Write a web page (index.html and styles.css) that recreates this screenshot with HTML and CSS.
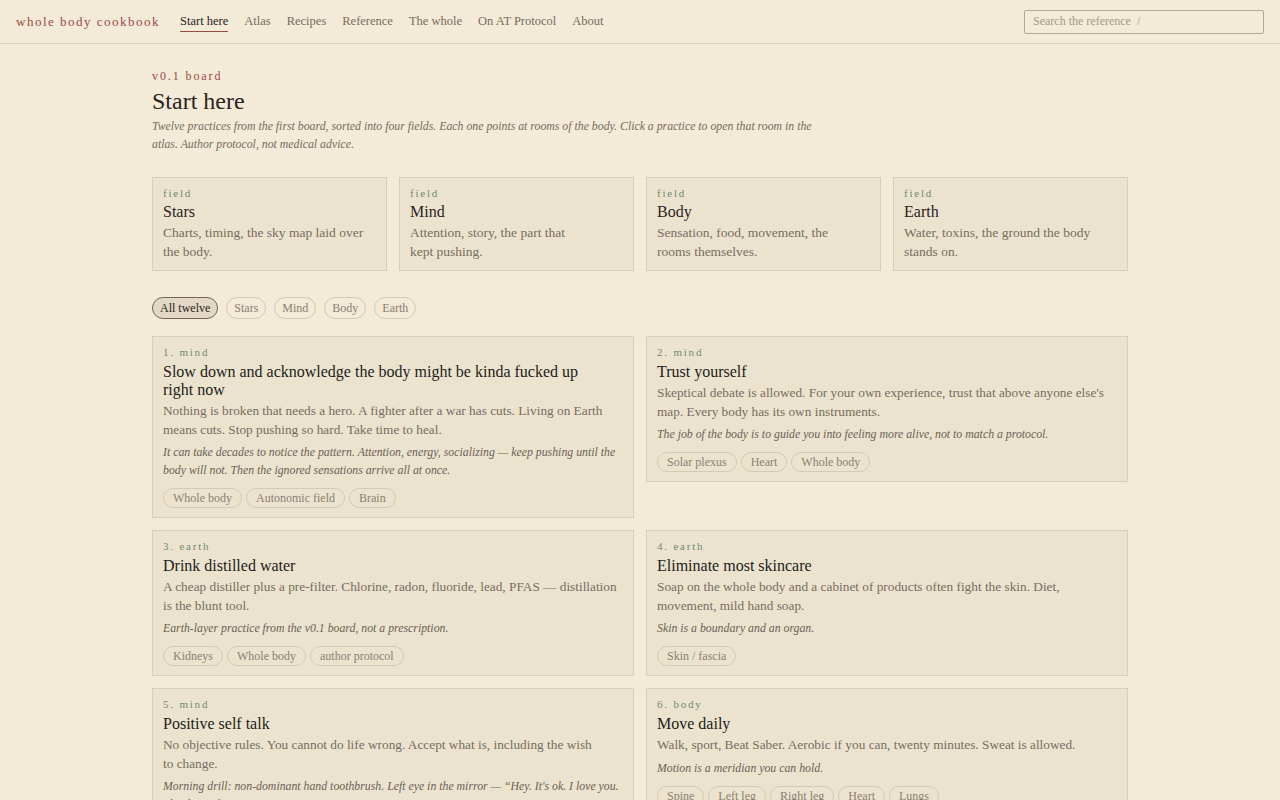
FILE: index.html
```html
<!DOCTYPE html>
<html lang="en">
  <head>
    <meta charset="utf-8" />
    <meta name="viewport" content="width=device-width, initial-scale=1" />
    <title>Start here · whole body cookbook</title>
    <link rel="stylesheet" href="styles.css">
  </head>
  <body>
    <header class="topbar">
      <a class="brand" href="#">whole body cookbook</a>
      <nav class="nav">
        <a class="nav-link active" href="#">Start here</a>
        <a class="nav-link" href="#">Atlas</a>
        <a class="nav-link" href="#">Recipes</a>
        <a class="nav-link" href="#">Reference</a>
        <a class="nav-link" href="#">The whole</a>
        <a class="nav-link" href="#">On AT Protocol</a>
        <a class="nav-link" href="#">About</a>
      </nav>
      <input class="search" type="text" placeholder="Search the reference  /">
    </header>

    <main class="page">
      <p class="eyebrow">v0.1 board</p>
      <h1 class="page-title">Start here</h1>
      <p class="intro">Twelve practices from the first board, sorted into four fields. Each one points at rooms of the body. Click a practice to open that room in the atlas. Author protocol, not medical advice.</p>

      <!-- the four fields -->
      <section class="fields">
        <div class="field">
          <span class="field-label">field</span>
          <h2 class="field-name">Stars</h2>
          <p class="field-desc">Charts, timing, the sky map laid over the body.</p>
        </div>
        <div class="field">
          <span class="field-label">field</span>
          <h2 class="field-name">Mind</h2>
          <p class="field-desc">Attention, story, the part that kept pushing.</p>
        </div>
        <div class="field">
          <span class="field-label">field</span>
          <h2 class="field-name">Body</h2>
          <p class="field-desc">Sensation, food, movement, the rooms themselves.</p>
        </div>
        <div class="field">
          <span class="field-label">field</span>
          <h2 class="field-name">Earth</h2>
          <p class="field-desc">Water, toxins, the ground the body stands on.</p>
        </div>
      </section>

      <div class="filters">
        <button class="pill active">All twelve</button>
        <button class="pill">Stars</button>
        <button class="pill">Mind</button>
        <button class="pill">Body</button>
        <button class="pill">Earth</button>
      </div>

      <!-- practices -->
      <section class="practices">
        <article class="practice">
          <span class="practice-num">1. mind</span>
          <h3 class="practice-title">Slow down and acknowledge the body might be kinda fucked up right&nbsp;now</h3>
          <p class="practice-body">Nothing is broken that needs a hero. A fighter after a war has cuts. Living on Earth means cuts. Stop pushing so hard. Take time to heal.</p>
          <p class="practice-note">It can take decades to notice the pattern. Attention, energy, socializing — keep pushing until the body will not. Then the ignored sensations arrive all at once.</p>
          <div class="tags">
            <span class="tag">Whole body</span>
            <span class="tag">Autonomic field</span>
            <span class="tag">Brain</span>
          </div>
        </article>

        <article class="practice">
          <span class="practice-num">2. mind</span>
          <h3 class="practice-title">Trust yourself</h3>
          <p class="practice-body">Skeptical debate is allowed. For your own experience, trust that above anyone else's map. Every body has its own instruments.</p>
          <p class="practice-note">The job of the body is to guide you into feeling more alive, not to match a protocol.</p>
          <div class="tags">
            <span class="tag">Solar plexus</span>
            <span class="tag">Heart</span>
            <span class="tag">Whole body</span>
          </div>
        </article>

        <article class="practice">
          <span class="practice-num">3. earth</span>
          <h3 class="practice-title">Drink distilled water</h3>
          <p class="practice-body">A cheap distiller plus a pre-filter. Chlorine, radon, fluoride, lead, PFAS — distillation is the blunt tool.</p>
          <p class="practice-note">Earth-layer practice from the v0.1 board, not a prescription.</p>
          <div class="tags">
            <span class="tag">Kidneys</span>
            <span class="tag">Whole body</span>
            <span class="tag">author protocol</span>
          </div>
        </article>

        <article class="practice">
          <span class="practice-num">4. earth</span>
          <h3 class="practice-title">Eliminate most skincare</h3>
          <p class="practice-body">Soap on the whole body and a cabinet of products often fight the skin. Diet, movement, mild hand soap.</p>
          <p class="practice-note">Skin is a boundary and an organ.</p>
          <div class="tags">
            <span class="tag">Skin / fascia</span>
          </div>
        </article>

        <article class="practice">
          <span class="practice-num">5. mind</span>
          <h3 class="practice-title">Positive self talk</h3>
          <p class="practice-body">No objective rules. You cannot do life wrong. Accept what is, including the wish to&nbsp;change.</p>
          <p class="practice-note">Morning drill: non-dominant hand toothbrush. Left eye in the mirror — “Hey. It's ok. I love you. Thank you for carrying me.”</p>
          <div class="tags">
            <span class="tag">Brain</span>
            <span class="tag">Heart</span>
          </div>
        </article>

        <article class="practice">
          <span class="practice-num">6. body</span>
          <h3 class="practice-title">Move daily</h3>
          <p class="practice-body">Walk, sport, Beat Saber. Aerobic if you can, twenty minutes. Sweat is allowed.</p>
          <p class="practice-note">Motion is a meridian you can hold.</p>
          <div class="tags">
            <span class="tag">Spine</span>
            <span class="tag">Left leg</span>
            <span class="tag">Right leg</span>
            <span class="tag">Heart</span>
            <span class="tag">Lungs</span>
          </div>
        </article>
      </section>
    </main>
  </body>
</html>
```

FILE: styles.css
```css
/* Paper palette */
:root {
  --paper: #f3ead7;
  --card: #ece3cf;
  --line: #d8ceb9;
  --ink: #2a241f;
  --muted: #766d60;
  --soft: #8a8173;
  --rust: #9a4a44;
  --sage: #6f8a72;
}

* {
  box-sizing: border-box;
}

body {
  margin: 0;
  background: var(--paper);
  color: var(--ink);
  font-family: "Liberation Serif", "Times New Roman", serif;
  -webkit-font-smoothing: antialiased;
}

a {
  color: inherit;
  text-decoration: none;
}

/* Top bar */
.topbar {
  display: flex;
  align-items: center;
  height: 44px;
  padding: 0 16px;
  border-bottom: 1px solid #ddd1b8;
}

.brand {
  font-size: 13px;
  letter-spacing: 1.5px;
  color: var(--rust);
  margin-right: 20px;
}

.nav {
  display: flex;
  gap: 16px;
}

.nav-link {
  font-size: 12.5px;
  color: var(--muted);
  padding: 3px 0 2px;
  border-bottom: 1px solid transparent;
}

.nav-link.active {
  color: var(--ink);
  border-bottom-color: var(--rust);
}

.search {
  margin-left: auto;
  width: 240px;
  height: 24px;
  padding: 0 8px;
  border: 1px solid #b2a896;
  border-radius: 2px;
  background: transparent;
  font-family: inherit;
  font-size: 12px;
  color: var(--ink);
}

.search::placeholder {
  color: #a39a89;
}

/* Page body */
.page {
  max-width: 976px;
  margin: 0 auto;
  padding: 25px 0 40px;
}

.eyebrow {
  margin: 0;
  font-size: 12px;
  line-height: 14px;
  letter-spacing: 1.9px;
  color: var(--rust);
}

.page-title {
  margin: 3px 0 0;
  font-size: 24px;
  font-weight: normal;
  line-height: 30px;
}

.intro {
  margin: 1px 0 0;
  max-width: 680px;
  font-size: 11.8px;
  font-style: italic;
  line-height: 18px;
  color: var(--muted);
}

/* Field cards */
.fields {
  display: grid;
  grid-template-columns: repeat(4, 1fr);
  gap: 12px;
  margin-top: 24px;
}

.field {
  background: var(--card);
  border: 1px solid var(--line);
  padding: 8px 10px 9px;
}

.field-label,
.practice-num {
  display: block;
  font-size: 11px;
  line-height: 14px;
  letter-spacing: 1.8px;
  color: var(--sage);
}

.field-name {
  margin: 2px 0 0;
  font-size: 16px;
  font-weight: normal;
  line-height: 20px;
}

.field-desc {
  margin: 1px 0 0;
  font-size: 13.5px;
  line-height: 19px;
  color: var(--muted);
  text-wrap: pretty;
}

/* Filter pills */
.filters {
  display: flex;
  gap: 8px;
  margin-top: 26px;
}

.pill {
  height: 22px;
  padding: 0 7px;
  border: 1px solid #d3c8b2;
  border-radius: 11px;
  background: transparent;
  font-family: inherit;
  font-size: 12px;
  color: var(--soft);
  cursor: pointer;
}

.pill.active {
  background: #e2d8c4;
  border-color: #6f675b;
  color: var(--ink);
}

/* Practice cards */
.practices {
  display: grid;
  grid-template-columns: 1fr 1fr;
  gap: 12px;
  align-items: start;
  margin-top: 17px;
}

.practice {
  background: var(--card);
  border: 1px solid var(--line);
  padding: 8px 10px 9px;
}

.practice-title {
  margin: 4px 0 0;
  max-width: 430px;
  font-size: 16px;
  font-weight: normal;
  line-height: 18px;
  color: #211c18;
}

.practice-body {
  margin: 3px 0 0;
  font-size: 13.3px;
  line-height: 18.5px;
  color: var(--muted);
}

.practice-note {
  margin: 4px 0 0;
  font-size: 11.8px;
  font-style: italic;
  line-height: 18px;
  color: #6a6256;
}

.tags {
  display: flex;
  flex-wrap: wrap;
  gap: 4px;
  margin-top: 9px;
}

.tag {
  height: 20px;
  padding: 0 9px;
  border: 1px solid #d4c9b3;
  border-radius: 10px;
  font-size: 12px;
  line-height: 18px;
  color: var(--soft);
}
```
